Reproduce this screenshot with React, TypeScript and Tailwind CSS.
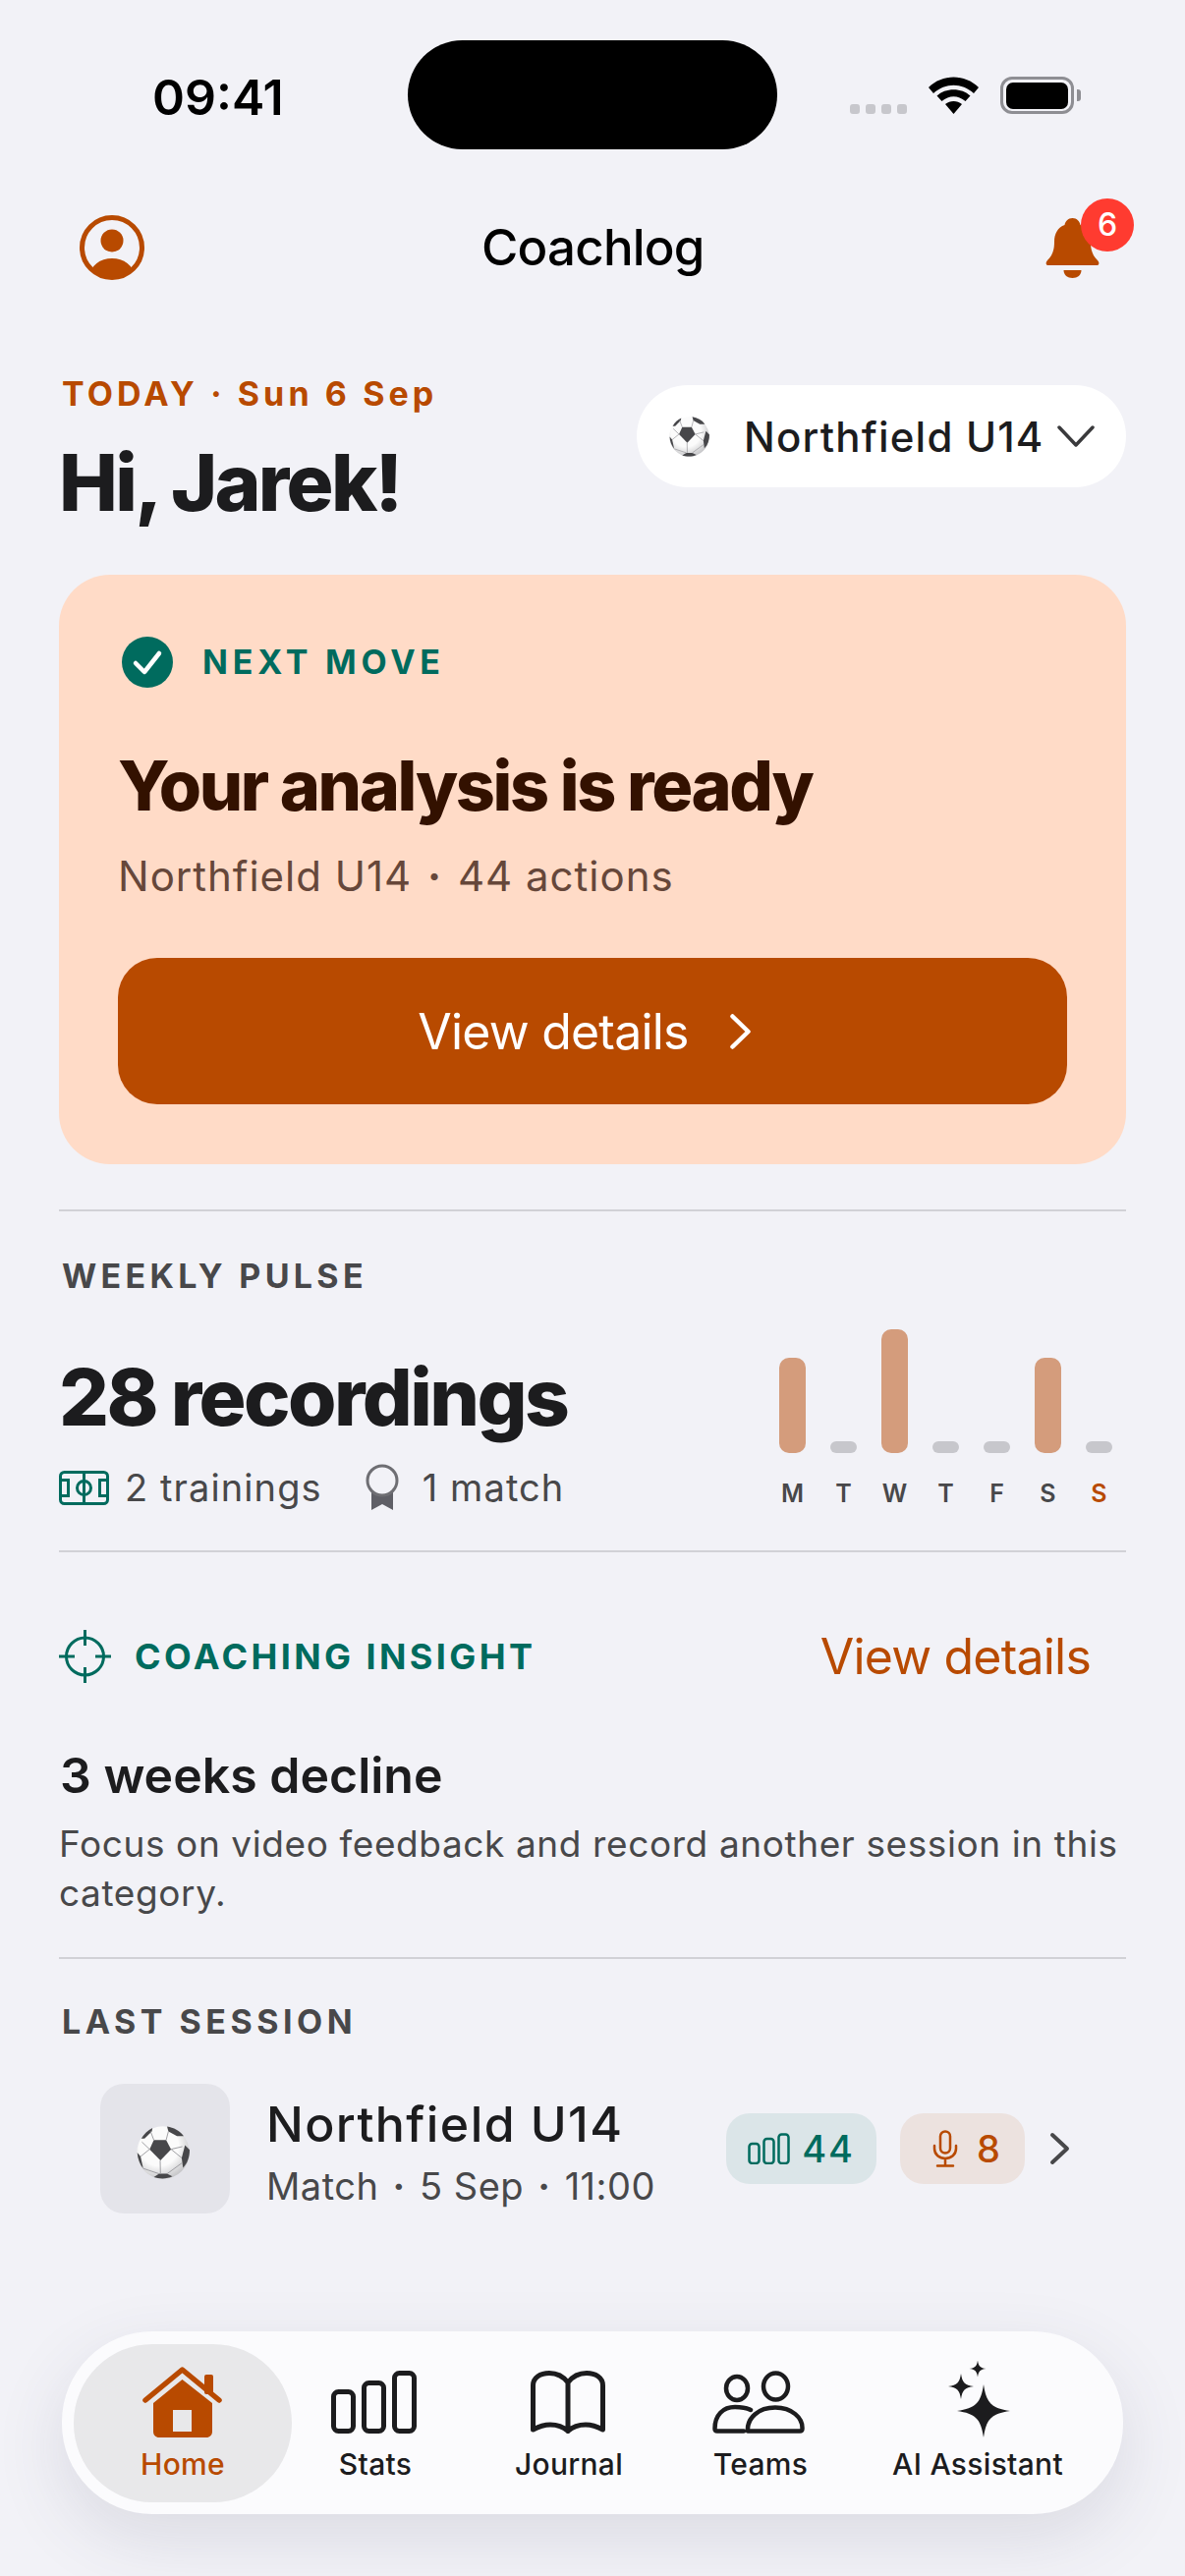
import React from "react";

const Ball = ({ size, id }: { size: number; id: string }) => (
  <svg width={size} height={size} viewBox="0 0 40 40">
    <defs>
      <radialGradient id={id} cx="0.42" cy="0.38" r="0.68">
        <stop offset="0.55" stopColor="#fbfbfb" />
        <stop offset="1" stopColor="#bdbdc0" />
      </radialGradient>
    </defs>
    <circle cx="20" cy="20" r="19.800" fill={`url(#${id})`} />
    <path d="M13 10.500h9.300l3.700 7-8 8.500-8.200-8.500z" fill="#47474a" />
    <path d="M3.500 9.500C5.500 6 8.500 3 12 1.500l-.5 2.500L6 9.500z" fill="#47474a" />
    <path d="M23 .3c5 .7 9.500 3.200 12.500 7.200h-5L24 4z" fill="#47474a" />
    <path d="M36.500 14.500L40 18c0 5-1.500 10-5 13.500L34 24z" fill="#47474a" />
    <path d="M.5 20L3 23l2 9C2.500 29 .8 25 .5 20z" fill="#47474a" />
    <path d="M13 38.500l4-2.500h6l4 2c-4 2-10 2-14 .5z" fill="#47474a" />
    <path d="M13 10.500L10.500 4M22.300 10.500L24 4M26 17.500l8.500-2M9.800 17.500L4 12M17.800 26l.2 10M3 23l6.800-5.500M34 24l-8-6.500M23 36l11-8M5 32l12 4" stroke="#9a9a9e" strokeWidth="0.7" fill="none" />
  </svg>
);

const Chevron = ({ w, h, color, sw }: { w: number; h: number; color: string; sw: number }) => (
  <svg width={w} height={h} viewBox={`0 0 ${w} ${h}`} fill="none">
    <path d={`M${sw} ${sw}L${w - sw - 1} ${h / 2}L${sw} ${h - sw}`} stroke={color} strokeWidth={sw} strokeLinecap="round" strokeLinejoin="round" />
  </svg>
);

const star = (x: number, y: number, r: number) => {
  const a = 0.1 * r;
  const b = 0.3 * r;
  return `M${x} ${y - r}C${x + a} ${y - b} ${x + b} ${y - a} ${x + r} ${y}C${x + b} ${y + a} ${x + a} ${y + b} ${x} ${y + r}C${x - a} ${y + b} ${x - b} ${y + a} ${x - r} ${y}C${x - b} ${y - a} ${x - a} ${y - b} ${x} ${y - r}z`;
};

const bars = [
  { d: "M", h: 97, on: true },
  { d: "T", h: 12, on: false },
  { d: "W", h: 126, on: true },
  { d: "T", h: 12, on: false },
  { d: "F", h: 12, on: false },
  { d: "S", h: 97, on: true },
  { d: "S", h: 12, on: false },
];

export default function App() {
  return (
    <div className="flex h-[2622px] w-[1206px] flex-col overflow-hidden bg-[#f2f2f7] [font-family:Inter,sans-serif] text-[#1c1c1e]">
      {/* status bar */}
      <div className="flex h-[152px] items-start pt-[41px]">
        <div className="ml-[155px] mt-[30px] w-[135px] text-[50px] leading-[56px] font-semibold text-black">09:41</div>
        <div className="ml-[125px] h-[111px] w-[376px] rounded-[56px] bg-black" />
        <div className="ml-[74px] mt-[37px] flex items-start">
          <div className="mt-[28px] flex gap-[6px]">
            <span className="h-[10px] w-[10px] rounded-[3px] bg-[#c7c7cc]" />
            <span className="h-[10px] w-[10px] rounded-[3px] bg-[#c7c7cc]" />
            <span className="h-[10px] w-[10px] rounded-[3px] bg-[#c7c7cc]" />
            <span className="h-[10px] w-[10px] rounded-[3px] bg-[#c7c7cc]" />
          </div>
          <svg className="ml-[22px]" width="51" height="38" viewBox="0 0 51 38">
            <path d="M0 11C14-3 37-3 51 11l-5 6C34 6 17 6 5 17z" fill="#000" />
            <path d="M8.500 19.500C17 11 34 11 42.500 19.500l-5 5.500C30 18.500 21 18.500 13.500 25z" fill="#000" />
            <path d="M17 28c5-4 12-4 17 0L25.500 38z" fill="#000" />
          </svg>
          <div className="ml-[22px] flex h-[38px] w-[75px] items-center justify-center rounded-[12px] border-[3px] border-[#8e8e93]">
            <span className="h-[27px] w-[63px] rounded-[7px] bg-black" />
          </div>
          <span className="ml-[3px] mt-[13px] h-[12px] w-[4px] rounded-r-[3px] bg-[#8e8e93]" />
        </div>
      </div>

      {/* header */}
      <div className="mt-[55px] flex h-[90px] items-center px-[81px]">
        <svg width="66" height="68" viewBox="0 0 66 68">
          <defs>
            <clipPath id="av"><circle cx="33" cy="34" r="30" /></clipPath>
          </defs>
          <circle cx="33" cy="34" r="30.500" fill="none" stroke="#b84a00" strokeWidth="5" />
          <circle cx="33" cy="27" r="11.500" fill="#b84a00" />
          <ellipse cx="33" cy="62" rx="22" ry="17" fill="#b84a00" clipPath="url(#av)" />
        </svg>
        <div className="ml-[343px] w-[224px] whitespace-nowrap text-center text-[51px] leading-[60px] font-medium tracking-[-0.800px] text-black">Coachlog</div>
        <div className="relative ml-[350px] h-[61px] w-[55px]">
          <svg width="55" height="61" viewBox="0 0 55 61">
            <path d="M27.500 0c4.500 0 7.500 3.500 8 7 7 2.500 10.500 9 10.500 17 0 9 2 14 7 19 2 2 2 5-1 5H3c-3 0-3-3-1-5 5-5 7-10 7-19 0-8 3.500-14.500 10.500-17 .5-3.500 3.500-7 8-7z" fill="#b84a00" />
            <path d="M18.500 53h18c0 5-4 8-9 8s-9-3-9-8z" fill="#b84a00" />
          </svg>
          <span className="absolute left-[36px] top-[-20px] flex h-[54px] w-[54px] items-center justify-center rounded-full bg-[#ff3b30] text-[32px] font-medium text-white">6</span>
        </div>
      </div>

      {/* greeting */}
      <div className="mt-[83px] flex items-start justify-between px-[60px]">
        <div className="pl-[3px]">
          <div className="text-[34px] leading-[42px] font-bold tracking-[4.100px] text-[#b84a00]">TODAY · Sun 6 Sep</div>
          <div className="-ml-[3px] mt-[20px] text-[80px] leading-[98px] font-extrabold tracking-[-2.700px]">Hi, Jarek!</div>
        </div>
        <div className="mt-[12px] flex h-[104px] w-[498px] items-center rounded-[52px] bg-white pl-[33px]">
          <Ball size={41} id="b1" />
          <span className="ml-[35px] w-[306px] whitespace-nowrap pt-[2px] text-[42px] leading-[50px] font-medium tracking-[1.200px]">Northfield U14</span>
          <svg className="ml-[13px]" width="38" height="22" viewBox="0 0 38 22" fill="none">
            <path d="M2 2l17 18L36 2" stroke="#3a3a3c" strokeWidth="3.500" strokeLinecap="round" strokeLinejoin="round" />
          </svg>
        </div>
      </div>

      {/* next move card */}
      <div className="mx-[60px] mt-[45px] h-[600px] rounded-[52px] bg-[#ffdbc7] px-[60px] pt-[62px]">
        <div className="flex items-center">
          <svg className="ml-[3px]" width="54" height="54" viewBox="0 0 54 54" fill="none">
            <circle cx="27" cy="27" r="26" fill="#006b5e" />
            <path d="M15 28l9 9 15-19" stroke="#fff" strokeWidth="4.500" strokeLinecap="round" strokeLinejoin="round" />
          </svg>
          <span className="ml-[29px] text-[34px] leading-[40px] font-bold tracking-[4.800px] text-[#006b5e]">NEXT MOVE</span>
        </div>
        <div className="mt-[57px] whitespace-nowrap text-[70px] leading-[84px] font-extrabold tracking-[-2.350px] text-[#331100]">Your analysis is ready</div>
        <div className="mt-[24px] text-[42px] leading-[52px] tracking-[1px] text-[#66473a]">Northfield U14 <span className="mx-[3px] font-bold">·</span> 44 actions</div>
        <div className="mt-[57px] flex h-[149px] items-center justify-center rounded-[40px] bg-[#b84a00] pr-[14px] text-white">
          <span className="text-[50px] leading-[60px] tracking-[-0.800px]">View details</span>
          <span className="ml-[40px]"><Chevron w={26} h={40} color="#ffffff" sw={4.500} /></span>
        </div>
      </div>

      {/* weekly pulse */}
      <div className="mx-[60px] mt-[46px] h-[349px] border-y-2 border-[#d1d1d6]">
        <div className="mt-[46px] pl-[3px] text-[34px] leading-[40px] font-bold tracking-[4.300px] text-[#48484a]">WEEKLY PULSE</div>
        <div className="flex items-start justify-between">
          <div>
            <div className="mt-[53px] whitespace-nowrap text-[80px] leading-[100px] font-extrabold tracking-[-2.600px]">28 recordings</div>
            <div className="mt-[18px] flex items-center text-[38px] leading-[46px] tracking-[1.100px] text-[#48484a]">
              <svg width="51" height="35" viewBox="0 0 51 35" fill="none" stroke="#006b5e" strokeWidth="3">
                <rect x="1.500" y="1.500" width="48" height="32" rx="4" />
                <path d="M25.500 1.500v32" />
                <circle cx="25.500" cy="17.500" r="7" />
                <path d="M1.500 9.500h8v16h-8M49.500 9.500h-8v16h8" />
              </svg>
              <span className="ml-[16px]">2 trainings</span>
              <svg className="ml-[44px]" width="34" height="48" viewBox="0 0 34 48" fill="none">
                <path d="M6 26v21l11-6 11 6V26z" fill="#5f5f66" />
                <circle cx="17" cy="17" r="15" fill="#f2f2f7" stroke="#6e6e73" strokeWidth="3" />
              </svg>
              <span className="ml-[24px]">1 match</span>
            </div>
          </div>
          <div className="mr-[14px] mt-[34px] flex gap-[25px]">
            {bars.map((b, i) => (
              <div key={i} className="flex w-[27px] flex-col items-center">
                <div className="flex h-[126px] items-end">
                  <div
                    className={`w-[27px] rounded-[10px] ${b.on ? "bg-[#d49c7c]" : "bg-[#c7c7cc]"}`}
                    style={{ height: b.h }}
                  />
                </div>
                <span className={`mt-[26px] text-[25px] leading-[30px] font-semibold ${i === 6 ? "font-bold text-[#b84a00]" : "text-[#48484a]"}`}>{b.d}</span>
              </div>
            ))}
          </div>
        </div>
      </div>

      {/* coaching insight */}
      <div className="mx-[60px] mt-[78px] flex h-[56px] items-center">
        <svg width="53" height="54" viewBox="0 0 53 54" fill="none" stroke="#006b5e" strokeWidth="3">
          <circle cx="26.500" cy="27" r="19" />
          <path d="M26.500 0v16M26.500 38v16M0 27h16M37 27h16" />
        </svg>
        <span className="ml-[24px] text-[36px] leading-[44px] font-bold tracking-[3.400px] text-[#006b5e]">COACHING INSIGHT</span>
        <span className="ml-auto mr-[36px] text-[50px] leading-[60px] tracking-[-0.800px] text-[#b84a00]">View details</span>
      </div>
      <div className="mx-[60px] mt-[63px] h-[217px] border-b-2 border-[#d1d1d6]">
        <div className="pl-[1px] text-[50px] leading-[60px] font-semibold tracking-[0px]">3 weeks decline</div>
        <div className="mt-[15px] text-[37px] leading-[50px] tracking-[0.600px] text-[#48484a]">Focus on video feedback and record another session in this category.</div>
      </div>

      {/* last session */}
      <div className="mx-[60px] mt-[44px] pl-[3px] text-[34px] leading-[40px] font-bold tracking-[4.500px] text-[#48484a]">LAST SESSION</div>
      <div className="mt-[43px] flex items-center pl-[102px]">
        <div className="flex h-[132px] w-[132px] items-center justify-center rounded-[24px] bg-[#e4e4ea] pr-[5px] pt-[8px]">
          <Ball size={54} id="b2" />
        </div>
        <div className="ml-[37px] w-[468px] pt-[6px]">
          <div className="text-[50px] leading-[60px] font-medium tracking-[1.400px]">Northfield U14</div>
          <div className="mt-[10px] text-[38px] leading-[46px] tracking-[0.500px] text-[#48484a]">Match <span className="mx-[3px] font-bold">·</span> 5 Sep <span className="mx-[3px] font-bold">·</span> 11:00</div>
        </div>
        <div className="flex h-[72px] w-[153px] items-center justify-center rounded-[24px] bg-[#dbe5e8] text-[#006b5e]">
          <svg width="43" height="32" viewBox="0 0 43 32" fill="none" stroke="#006b5e" strokeWidth="2.500">
            <rect x="1.500" y="11" width="10" height="20" rx="3" />
            <rect x="16.500" y="6" width="10" height="25" rx="3" />
            <rect x="31.500" y="1.500" width="10" height="29.500" rx="3" />
          </svg>
          <span className="ml-[12px] text-[38px] leading-[44px] font-medium tracking-[1.800px]">44</span>
        </div>
        <div className="ml-[24px] flex h-[72px] w-[127px] items-center justify-center rounded-[24px] bg-[#ece2df] pl-[8px] text-[#b84a00]">
          <svg width="26" height="38" viewBox="0 0 26 38" fill="none" stroke="#b84a00" strokeWidth="2.500" strokeLinecap="round">
            <rect x="8" y="1.500" width="10" height="22" rx="5" />
            <path d="M2 16v3c0 6 5 10 11 10s11-4 11-10v-3M13 29v7M5 36.500h16" />
          </svg>
          <span className="ml-[19px] text-[38px] leading-[44px] font-medium">8</span>
        </div>
        <span className="ml-[24px]"><Chevron w={24} h={36} color="#48484a" sw={4} /></span>
      </div>

      {/* tab bar */}
      <div className="mx-[63px] mb-[63px] mt-auto flex h-[186px] items-start rounded-[92px] bg-[#fbfbfd] pl-[12px] pt-[13px] shadow-[0_24px_70px_rgba(60,60,90,0.13)]">
        <div className="flex h-[161px] w-[222px] flex-col items-center rounded-[80px] bg-[#e8e8ea] pt-[23px]">
          <svg className="-ml-[2px]" width="81" height="72" viewBox="0 0 81 72" fill="none">
            <rect x="63" y="8" width="9" height="20" rx="2" fill="#b84a00" />
            <path d="M3 34L40.500 3 78 34" stroke="#b84a00" strokeWidth="5.500" strokeLinecap="round" strokeLinejoin="round" />
            <path fillRule="evenodd" d="M11 37L40.500 13 71 37v29c0 3.500-2.500 6-6 6H17c-3.500 0-6-2.500-6-6zM31 44v22h19V44z" fill="#b84a00" />
          </svg>
          <span className="mt-[7px] text-[30px] leading-[40px] font-medium tracking-[0.300px] text-[#b84a00]">Home</span>
        </div>
        <div className="flex w-[170px] flex-col items-center pt-[27px]">
          <svg className="-ml-[4px]" width="87" height="64" viewBox="0 0 87 64" fill="none" stroke="#1c1c1e" strokeWidth="5">
            <rect x="2.500" y="21.500" width="20" height="40" rx="5" />
            <rect x="33.500" y="12.500" width="20" height="49" rx="5" />
            <rect x="64.500" y="2.500" width="20" height="59" rx="5" />
          </svg>
          <span className="mt-[11px] text-[30px] leading-[40px] font-medium tracking-[0.300px]">Stats</span>
        </div>
        <div className="ml-[26px] flex w-[172px] flex-col items-center pt-[27px]">
          <svg className="-ml-[2px]" width="76" height="64" viewBox="0 0 76 64" fill="none" stroke="#1c1c1e" strokeWidth="5" strokeLinecap="round" strokeLinejoin="round">
            <path d="M38 12C33 5.500 27 2.500 19 2.500 10 2.500 2.500 7 2.500 15v45C8 57 13 55 20 55c7 0 13 2 18 6.500C43 57 49 55 56 55c7 0 12 2 17.500 5V15C73.500 7 66 2.500 57 2.500 49 2.500 43 5.500 38 12zM38 12v49.500" />
          </svg>
          <span className="mt-[11px] text-[30px] leading-[40px] font-medium tracking-[0.300px]">Journal</span>
        </div>
        <div className="ml-[24px] flex w-[170px] flex-col items-center pt-[27px]">
          <svg className="-ml-[4px]" width="94" height="64" viewBox="0 0 94 64" fill="none" stroke="#1c1c1e" strokeWidth="4.500" strokeLinecap="round" strokeLinejoin="round">
            <ellipse cx="25" cy="18" rx="11" ry="12" />
            <ellipse cx="64.500" cy="16" rx="12.500" ry="13.500" />
            <path d="M39 40C35 38 29 37 23 37 11 37 2.500 45 2.500 59c0 2 1 2.500 2.500 2.500H32" />
            <path d="M36 61.500C35 48 47 37.500 64 37.500S92 48 91.500 59c0 2-1 2.500-2.500 2.500z" />
          </svg>
          <span className="mt-[11px] text-[30px] leading-[40px] font-medium tracking-[0.300px]">Teams</span>
        </div>
        <div className="ml-[22px] flex w-[228px] flex-col items-center pt-[17px]">
          <svg width="68" height="78" viewBox="0 0 68 78" fill="#1c1c1e">
            <path d={star(40, 51, 27)} />
            <path d={star(17, 26, 13)} />
            <path d={star(34, 8, 8.500)} />
          </svg>
          <span className="mt-[7px] text-[30px] leading-[40px] font-medium tracking-[0.300px]">AI Assistant</span>
        </div>
      </div>
    </div>
  );
}
